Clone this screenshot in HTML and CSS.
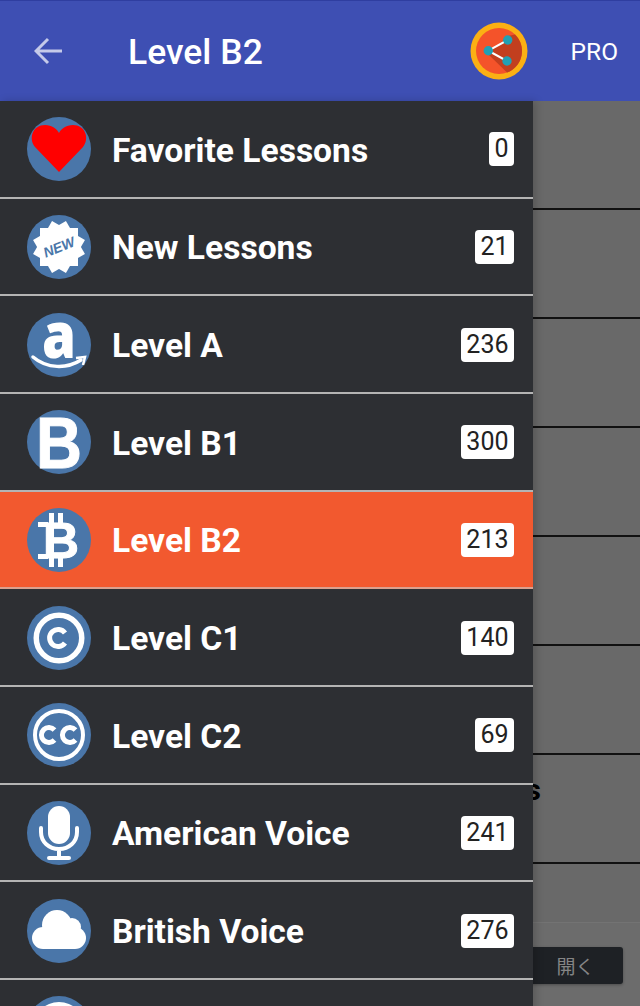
FILE: index.html
```html
<!DOCTYPE html>
<html lang="en">
<head>
    <meta charset="UTF-8">
    <meta name="viewport" content="width=device-width, initial-scale=1.0">
    <title>Level B2</title>
    <link rel="stylesheet" href="styles.css">
</head>
<body>
    <div class="page">
        <header class="topbar">
            <svg class="back" viewBox="0 0 30 30">
                <path d="M28 15H2M14 3L2 15l12 12"/>
            </svg>
            <h1 class="title">Level B2</h1>
            <svg class="share" viewBox="0 0 58 58">
                <circle cx="29" cy="29" r="28.5" fill="#fbb014"/>
                <circle cx="29" cy="29" r="23" fill="#f4532a"/>
                <path d="M38 14L45 12.5A23 23 0 0 1 37 50.6L18 32Z" fill="#c23f1f"/>
                <path d="M37.7 18L18.3 28.7L37 39" fill="none" stroke="#fff" stroke-width="2"/>
                <circle cx="37.7" cy="18" r="4.7" fill="#21a0b4"/>
                <circle cx="18.3" cy="28.7" r="4.7" fill="#21a0b4"/>
                <circle cx="37" cy="39" r="4.7" fill="#21a0b4"/>
            </svg>
            <span class="pro">PRO</span>
        </header>

        <div class="lessons">
            <div class="lesson"></div>
            <div class="lesson"></div>
            <div class="lesson"></div>
            <div class="lesson"></div>
            <div class="lesson"></div>
            <div class="lesson"></div>
            <div class="lesson lesson-title">Lessons</div>
            <div class="spacer"></div>
            <div class="ad"><button class="open">開く</button></div>
        </div>

        <nav class="drawer">
            <div class="row">
                <svg class="icon" viewBox="0 0 64 64">
                    <circle class="disc" cx="32" cy="32" r="32"/>
                    <path d="M32 55L8 30C1 21 6 8 18 8C25 8 30 12 32 16C34 12 39 8 46 8C58 8 63 21 56 30Z" fill="#f00"/>
                </svg>
                <span class="label">Favorite Lessons</span>
                <span class="count">0</span>
            </div>
            <div class="row">
                <svg class="icon" viewBox="0 0 64 64">
                    <circle class="disc" cx="32" cy="32" r="32"/>
                    <g fill="#fff">
                        <rect x="13" y="13" width="38" height="38"/>
                        <rect x="13" y="13" width="38" height="38" transform="rotate(30 32 32)"/>
                        <rect x="13" y="13" width="38" height="38" transform="rotate(60 32 32)"/>
                    </g>
                    <text class="new" x="32" y="37" text-anchor="middle" transform="rotate(-22 32 32)">NEW</text>
                </svg>
                <span class="label">New Lessons</span>
                <span class="count">21</span>
            </div>
            <div class="row">
                <svg class="icon" viewBox="0 0 64 64">
                    <circle class="disc" cx="32" cy="32" r="32"/>
                    <text class="letter-a" x="15" y="45" textLength="34" lengthAdjust="spacingAndGlyphs">a</text>
                    <path d="M6 44C20 56 40 56 54 47" fill="none" stroke="#fff" stroke-width="3.5" stroke-linecap="round"/>
                    <path d="M49 45L58 44L56 52" fill="none" stroke="#fff" stroke-width="2.5"/>
                </svg>
                <span class="label">Level A</span>
                <span class="count">236</span>
            </div>
            <div class="row">
                <svg class="icon" viewBox="0 0 64 64">
                    <circle class="disc" cx="32" cy="32" r="32"/>
                    <text class="letter-b" x="9" y="58" textLength="46" lengthAdjust="spacingAndGlyphs">B</text>
                </svg>
                <span class="label">Level B1</span>
                <span class="count">300</span>
            </div>
            <div class="row active">
                <svg class="icon" viewBox="0 0 64 64">
                    <circle class="disc" cx="32" cy="32" r="32"/>
                    <g fill="#fff">
                        <rect x="22" y="5" width="5" height="10"/>
                        <rect x="31" y="5" width="5" height="10"/>
                        <rect x="22" y="49" width="5" height="10"/>
                        <rect x="31" y="49" width="5" height="10"/>
                        <rect x="11" y="14" width="10" height="5"/>
                        <rect x="11" y="46" width="10" height="5"/>
                    </g>
                    <text class="letter-btc" x="16" y="50" textLength="36" lengthAdjust="spacingAndGlyphs">B</text>
                </svg>
                <span class="label">Level B2</span>
                <span class="count">213</span>
            </div>
            <div class="row">
                <svg class="icon" viewBox="0 0 64 64">
                    <circle class="disc" cx="32" cy="32" r="32"/>
                    <circle class="ring" cx="32" cy="32" r="22.75"/>
                    <path class="cc" d="M38 27A8.5 8.5 0 1 0 38 37"/>
                </svg>
                <span class="label">Level C1</span>
                <span class="count">140</span>
            </div>
            <div class="row">
                <svg class="icon" viewBox="0 0 64 64">
                    <circle class="disc" cx="32" cy="32" r="32"/>
                    <circle class="ring thin" cx="32" cy="32" r="24"/>
                    <path class="cc" d="M27.5 27A7.5 7.5 0 1 0 27.5 37M48.5 27A7.5 7.5 0 1 0 48.5 37"/>
                </svg>
                <span class="label">Level C2</span>
                <span class="count">69</span>
            </div>
            <div class="row">
                <svg class="icon" viewBox="0 0 64 64">
                    <circle class="disc" cx="32" cy="32" r="32"/>
                    <rect x="21" y="5" width="22" height="38" rx="11" fill="#fff"/>
                    <path class="mic" d="M14 27V31C14 41 22 48 32 48C42 48 50 41 50 31V27M32 48V56M22 57H42"/>
                </svg>
                <span class="label">American Voice</span>
                <span class="count">241</span>
            </div>
            <div class="row">
                <svg class="icon" viewBox="0 0 64 64">
                    <circle class="disc" cx="32" cy="32" r="32"/>
                    <g fill="#fff">
                        <circle cx="30" cy="26" r="15"/>
                        <circle cx="45" cy="28" r="9"/>
                        <circle cx="16" cy="39" r="11"/>
                        <circle cx="48" cy="39" r="11"/>
                        <rect x="16" y="30" width="32" height="20"/>
                    </g>
                </svg>
                <span class="label">British Voice</span>
                <span class="count">276</span>
            </div>
            <div class="row">
                <svg class="icon" viewBox="0 0 64 64">
                    <circle class="disc" cx="32" cy="32" r="32"/>
                    <circle cx="32" cy="32" r="26" fill="#fff"/>
                </svg>
            </div>
        </nav>
    </div>
</body>
</html>
```

FILE: styles.css
```css
body {
    margin: 0;
    font-family: Roboto, sans-serif;
}
.page {
    position: relative;
    width: 640px;
    height: 1006px;
    overflow: hidden;
    background-color: #696969;
}
.topbar {
    display: flex;
    align-items: center;
    box-sizing: border-box;
    height: 101px;
    padding-left: 34px;
    background-color: #3e4fb3;
    border-top: 1px solid #2f3ea0;
    color: #fff;
}
.back {
    width: 30px;
    height: 30px;
    fill: none;
    stroke: #c5cae9;
    stroke-width: 3;
}
.title {
    margin: 2px 0 0 64px;
    font-size: 35.5px;
    font-weight: 500;
}
.share {
    width: 58px;
    height: 58px;
    margin-left: auto;
}
.pro {
    margin: 0 22px 0 43px;
    font-size: 24.5px;
}
.lesson {
    box-sizing: border-box;
    height: 109px;
    border-bottom: 2px solid #111;
}
.lesson-title {
    padding: 17px 99px 0 0;
    text-align: right;
    font-size: 30px;
    font-weight: 700;
    color: #000;
}
.spacer {
    height: 58px;
}
.ad {
    display: flex;
    justify-content: flex-end;
    box-sizing: border-box;
    height: 85px;
    padding: 24px 17px 0 0;
    background-color: #6c6c6c;
    border-top: 1px solid #737373;
}
.open {
    width: 110px;
    height: 37px;
    padding: 0 0 0 15px;
    border: none;
    border-radius: 3px;
    background-color: #1e2125;
    box-shadow: 0 1px 3px rgba(0,0,0,0.3);
    color: #858585;
    font-family: "Noto Sans CJK JP", sans-serif;
    font-size: 19px;
}
.drawer {
    position: absolute;
    top: 101px;
    left: 0;
    width: 533px;
    background-color: #2d2f33;
    box-shadow: 3px 0 8px rgba(0,0,0,0.18);
}
.row {
    display: flex;
    align-items: center;
    box-sizing: border-box;
    height: 97.66px;
    padding: 1px 19px 0 27px;
    border-bottom: 2px solid #b4b4b4;
    color: #fff;
}
.row.active {
    background-color: #f2592f;
    border-bottom-color: #dba08e;
}
.icon {
    flex: none;
    width: 64px;
    height: 64px;
    margin-right: 21px;
    overflow: visible;
}
.disc {
    fill: #4a76a9;
}
.label {
    flex: 1;
    margin-top: 2px;
    font-size: 33.6px;
    font-weight: 700;
}
.count {
    padding: 0 5.5px;
    border-radius: 4px;
    background-color: #fff;
    color: #222;
    font-size: 25px;
    line-height: 34px;
}
.new {
    font-family: "Liberation Sans", sans-serif;
    font-size: 14px;
    font-weight: 700;
    font-style: italic;
    fill: #4a76a9;
}
.letter-a {
    font-family: "Open Sans", sans-serif;
    font-size: 64px;
    font-weight: 800;
    fill: #fff;
}
.letter-b {
    font-family: "Liberation Sans", sans-serif;
    font-size: 73px;
    font-weight: 700;
    fill: #fff;
    stroke: #fff;
    stroke-width: 1;
}
.letter-btc {
    font-family: "Liberation Sans", sans-serif;
    font-size: 50px;
    font-weight: 700;
    fill: #fff;
    stroke: #fff;
    stroke-width: 1;
}
.ring {
    fill: none;
    stroke: #fff;
    stroke-width: 5.5;
}
.ring.thin {
    stroke-width: 4;
}
.cc {
    fill: none;
    stroke: #fff;
    stroke-width: 5;
}
.mic {
    fill: none;
    stroke: #fff;
    stroke-width: 4;
    stroke-linecap: round;
}
```
